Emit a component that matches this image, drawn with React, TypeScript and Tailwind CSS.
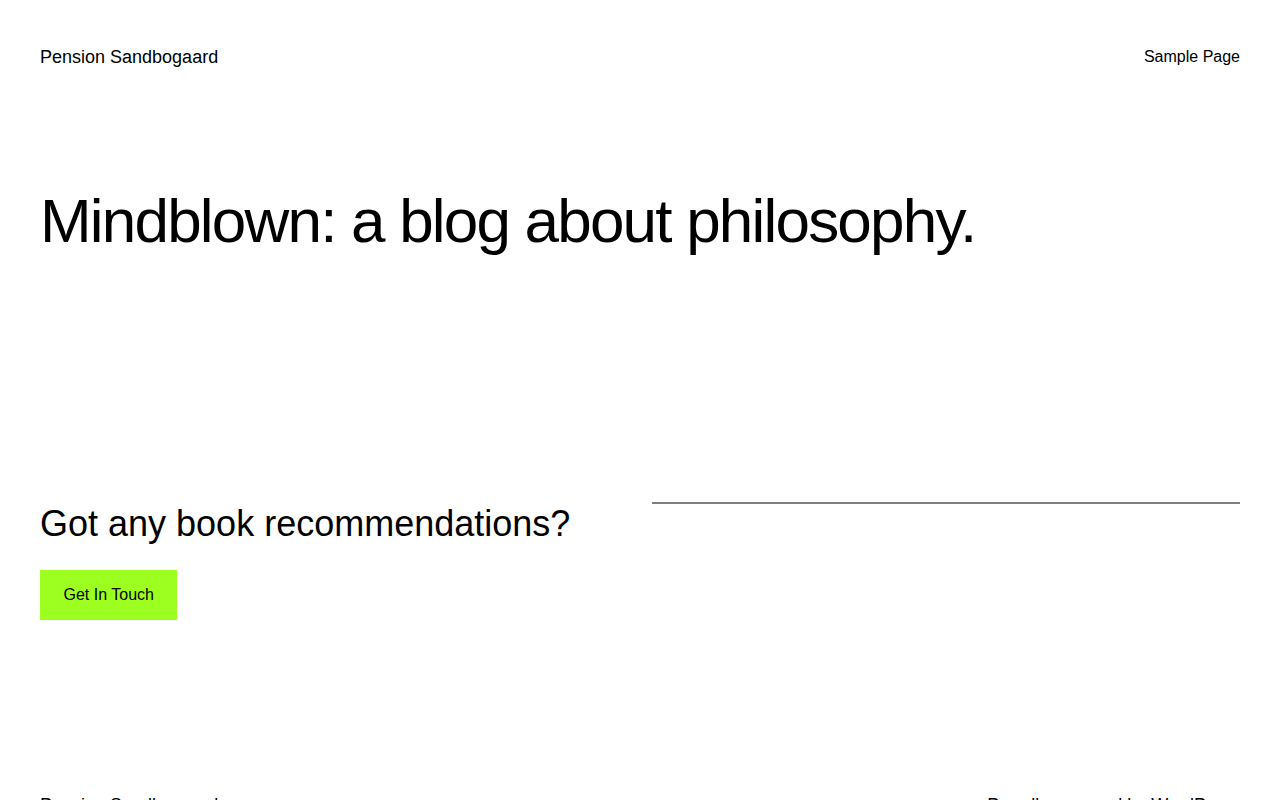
export default function App() {
  return (
    <div className="min-h-screen bg-white text-black font-['Liberation_Sans',Arial,sans-serif]">
      {/* Header */}
      <header className="flex items-center justify-between px-10 pt-11">
        <a href="#" className="text-[18px] leading-[24px]">
          Pension Sandbogaard
        </a>
        <nav className="mt-[1px]">
          <a href="#" className="text-[16px] leading-[24px]">
            Sample Page
          </a>
        </nav>
      </header>

      {/* Hero */}
      <main className="px-10">
        <h1 className="mt-[115px] text-[62px] leading-[1.2] tracking-[-1.8px]">
          Mindblown: a blog about philosophy.
        </h1>

        <section className="mt-[244px] grid grid-cols-2 gap-6">
          <div>
            <h2 className="text-[36px] leading-[1.2]">
              Got any book recommendations?
            </h2>
            <a
              href="#"
              className="mt-6 inline-block bg-[#9dff20] px-[23.5px] py-[13px] text-[16px] leading-[24px]"
            >
              Get In Touch
            </a>
          </div>
          <div>
            <hr className="border-0 border-t-2 border-[#808080]" />
          </div>
        </section>
      </main>

      {/* Footer */}
      <footer className="mt-[173px] flex items-center justify-between px-10 pb-10">
        <span className="text-[18px] leading-[24px]">Pension Sandbogaard</span>
        <span className="text-[18px] leading-[24px]">
          Proudly powered by{" "}
          <a href="#" className="underline">
            WordPress
          </a>
        </span>
      </footer>
    </div>
  );
}
